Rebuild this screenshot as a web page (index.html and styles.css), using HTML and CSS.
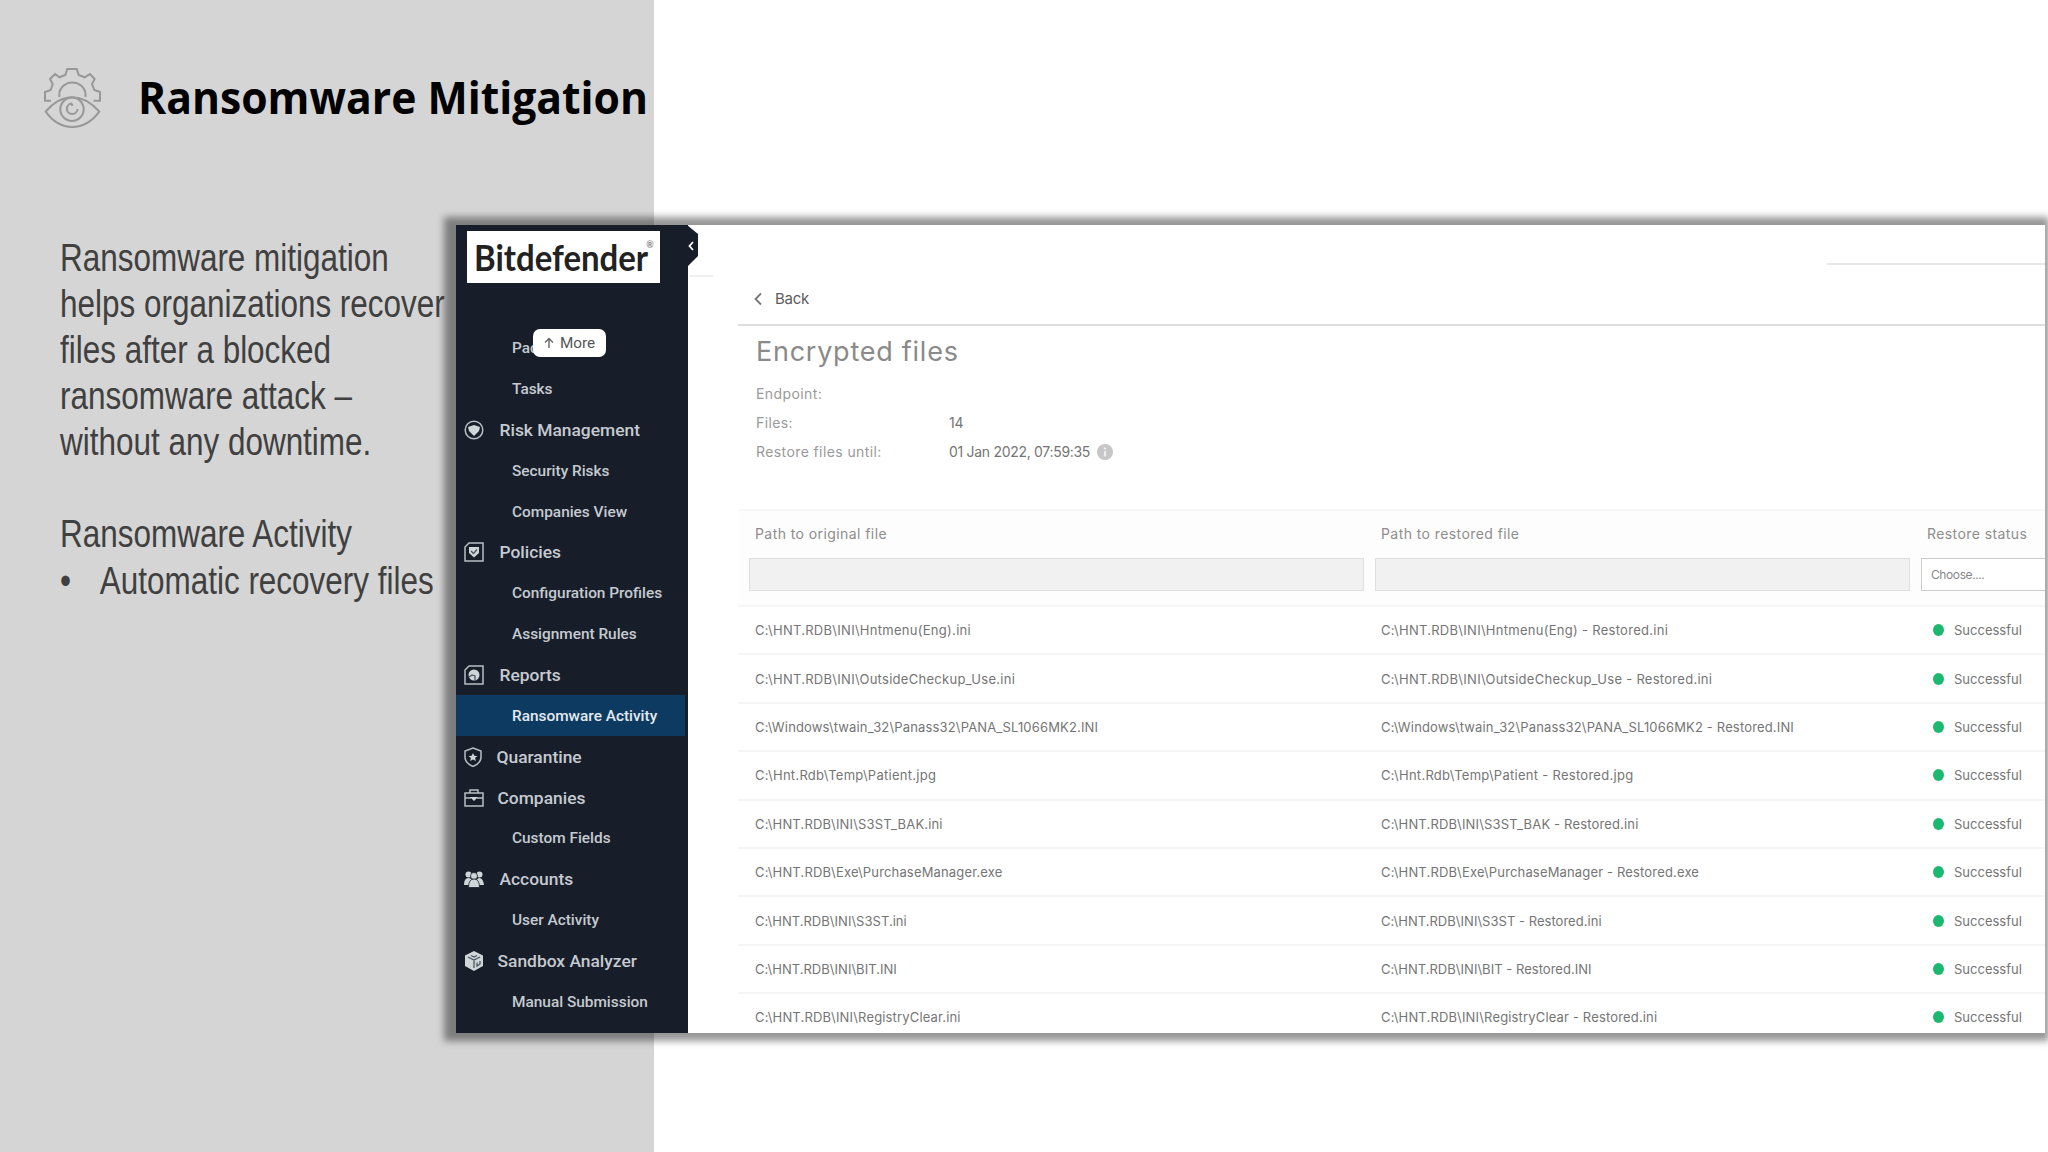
FILE: index.html
```html
<!DOCTYPE html>
<html lang="en">
<head>
<meta charset="utf-8">
<title>Ransomware Mitigation</title>
<link rel="stylesheet" href="styles.css">
</head>
<body>
<main class="slide">
  <section class="intro">
    <header class="intro-head">
      <svg class="gear-eye" viewBox="0 0 60 62" fill="none" stroke="#989898" stroke-width="2">
        <path d="M9 33.700H3V25L8.700 23 10.700 17 8 12 13 7 17.500 10.300 23.300 8 25.300 2H34.700L36.700 8 42.700 10.300 48 7 52.700 12 50 17 52.300 23 58 25V33.700H51.500"/>
        <path d="M17.300 30V28a13 12.500 0 0 1 26.200 0v2"/>
        <path d="M3.700 44.700Q16 30.300 30.300 30.300T57.300 44.700Q46 60 30.300 60T3.700 44.700Z"/>
        <circle cx="30" cy="42.300" r="11.700"/>
        <path d="M30 36.500a5.300 5.300 0 1 0 5.500 5.500M30 36.500v2.500"/>
      </svg>
      <h1>Ransomware Mitigation</h1>
    </header>
    <div class="copy">
      <p>Ransomware mitigation<br>helps organizations recover<br>files after a blocked<br>ransomware attack –<br>without any downtime.</p>
      <p>Ransomware Activity</p>
      <ul><li>Automatic recovery files</li></ul>
    </div>
  </section>

  <section class="window">
    <aside class="sidebar">
      <div class="logo"><span>Bitdefender</span><sup>®</sup></div>
      <div class="handle"><svg viewBox="0 0 11 42"><path d="M0 0 11 9V31L0 42Z" fill="#171e2a"/><path d="M6 17 2.500 21 6 25" fill="none" stroke="#fff" stroke-width="1.800"/></svg></div>
      <nav>
        <a class="sub">Pac</a>
        <a class="sub">Tasks</a>
        <a class="top"><svg viewBox="0 0 20 20"><circle cx="10" cy="10" r="8.800"/><path class="f" d="M4 7l6-2 6 2-1 4-5 5-5-5z"/></svg><span>Risk Management</span></a>
        <a class="sub">Security Risks</a>
        <a class="sub">Companies View</a>
        <a class="top"><svg viewBox="0 0 20 20"><path d="M5 1H19V19H1V5Z"/><path class="f" d="M5 5H15V11L10 15.500 5 11Z"/><path class="d" d="M7 9l2.500 2.500L13 7.500"/></svg><span>Policies</span></a>
        <a class="sub">Configuration Profiles</a>
        <a class="sub">Assignment Rules</a>
        <a class="top"><svg viewBox="0 0 20 20"><path d="M5 1H19V19H1V5Z"/><circle class="f" cx="10" cy="10" r="5.500"/><path class="d" d="M5 12l3-2 3 1 0 4"/></svg><span>Reports</span></a>
        <a class="sub active">Ransomware Activity</a>
        <a class="top q"><svg viewBox="0 0 20 20"><path d="M9 1 17 4V10Q17 16 9 19.500 1 16 1 10V4Z"/><path class="f" d="M9 6l1.300 2.800 3 .3-2.200 2 .7 3L9 12.600 6.200 14.100l.7-3-2.200-2 3-.3z"/></svg><span>Quarantine</span></a>
        <a class="top c"><svg viewBox="0 0 20 20"><path d="M1 5H19V18H1ZM6 5V2H14V5M1 10H7M13 10H19"/><path class="f" d="M6 9H14L10 13Z"/></svg><span>Companies</span></a>
        <a class="sub">Custom Fields</a>
        <a class="top"><svg viewBox="0 0 20 20"><g class="f"><circle cx="4.500" cy="5.500" r="3"/><circle cx="15.500" cy="5.500" r="3"/><path d="M0 16q0-7 4.500-7T8 16ZM12 16q0-7 3.500-7T20 16Z"/></g><g class="f o"><circle cx="10" cy="7" r="3.500"/><path d="M4.500 18.500q0-8.500 5.500-8.500t5.500 8.500Z"/></g></svg><span>Accounts</span></a>
        <a class="sub">User Activity</a>
        <a class="top c"><svg viewBox="0 0 20 20"><path class="f" d="M10 0 19 4.500V15L10 20 1 15V4.500Z"/><path class="d" d="M4 6l6 3 6-3M10 9v8M13 11.500v3.500l3-2v-3M7 4.500l3 1.500 3-1.500"/></svg><span>Sandbox Analyzer</span></a>
        <a class="sub">Manual Submission</a>
      </nav>
      <button class="more"><svg viewBox="0 0 12 12"><path d="M6 11V2M2 5.500 6 1.500 10 5.500" fill="none" stroke="#666" stroke-width="1.400"/></svg><span>More</span></button>
    </aside>
    <div class="content">
      <div class="strip"><i></i><b></b></div>
      <div class="back"><svg viewBox="0 0 8 14"><path d="M7 1.500 1.500 7 7 12.500" fill="none" stroke="#777" stroke-width="1.800"/></svg><span>Back</span></div>
      <h2>Encrypted files</h2>
      <dl>
        <dt>Endpoint:</dt><dd></dd>
        <dt>Files:</dt><dd>14</dd>
        <dt>Restore files until:</dt><dd><span>01 Jan 2022, 07:59:35</span><svg viewBox="0 0 16 16"><circle cx="8" cy="8" r="8" fill="#c6c6c6"/><path d="M8 3.500V5.500M8 7V12.500" stroke="#ececec" stroke-width="2.400"/></svg></dd>
      </dl>
      <div class="table">
        <div class="thead">
          <div><label>Path to original file</label><div class="field"></div></div>
          <div><label>Path to restored file</label><div class="field"></div></div>
          <div><label>Restore status</label><div class="field select">Choose....</div></div>
        </div>
        <div class="row"><span>C:\HNT.RDB\INI\Hntmenu(Eng).ini</span><span>C:\HNT.RDB\INI\Hntmenu(Eng) - Restored.ini</span><span class="ok">Successful</span></div>
        <div class="row"><span>C:\HNT.RDB\INI\OutsideCheckup_Use.ini</span><span>C:\HNT.RDB\INI\OutsideCheckup_Use - Restored.ini</span><span class="ok">Successful</span></div>
        <div class="row long"><span>C:\Windows\twain_32\Panass32\PANA_SL1066MK2.INI</span><span>C:\Windows\twain_32\Panass32\PANA_SL1066MK2 - Restored.INI</span><span class="ok">Successful</span></div>
        <div class="row"><span>C:\Hnt.Rdb\Temp\Patient.jpg</span><span>C:\Hnt.Rdb\Temp\Patient - Restored.jpg</span><span class="ok">Successful</span></div>
        <div class="row long"><span>C:\HNT.RDB\INI\S3ST_BAK.ini</span><span>C:\HNT.RDB\INI\S3ST_BAK - Restored.ini</span><span class="ok">Successful</span></div>
        <div class="row long"><span>C:\HNT.RDB\Exe\PurchaseManager.exe</span><span>C:\HNT.RDB\Exe\PurchaseManager - Restored.exe</span><span class="ok">Successful</span></div>
        <div class="row short"><span>C:\HNT.RDB\INI\S3ST.ini</span><span>C:\HNT.RDB\INI\S3ST - Restored.ini</span><span class="ok">Successful</span></div>
        <div class="row short"><span>C:\HNT.RDB\INI\BIT.INI</span><span>C:\HNT.RDB\INI\BIT - Restored.INI</span><span class="ok">Successful</span></div>
        <div class="row long"><span>C:\HNT.RDB\INI\RegistryClear.ini</span><span>C:\HNT.RDB\INI\RegistryClear - Restored.ini</span><span class="ok">Successful</span></div>
      </div>
    </div>
  </section>
</main>
</body>
</html>
```
FILE: styles.css
```css
* { box-sizing: border-box; margin: 0; padding: 0; }
body { background: #fff; }
.slide { position: relative; width: 2048px; height: 1152px; overflow: hidden; background: #fff; }

.intro { width: 654px; height: 1152px; background: #d5d5d5; }
.intro-head { display: flex; align-items: center; gap: 36px; height: 196px; padding-left: 42px; }
.gear-eye { width: 60px; height: 62px; flex: none; }
h1 { font: bold 45px/60px "Open Sans", sans-serif; color: #000; white-space: nowrap; transform: scaleX(.948); transform-origin: left; margin-top: -2px; }
.copy { position: relative; z-index: 2; width: 470px; margin: 39px 0 0 60px; font: 38px/46.100px "Liberation Sans", Arial, sans-serif; color: #404040; white-space: nowrap; transform: scaleX(.828); transform-origin: left; }
.copy p + p { margin-top: 46px; }
.copy ul { list-style: none; }
.copy li { display: flex; }
.copy li::before { content: "•"; width: 48px; flex: none; }

.window { position: absolute; left: 456px; top: 225px; width: 1589px; height: 808px; display: flex; background: #fff; box-shadow: -4px 0 7px 8px rgba(0, 0, 0, .41); }
.sidebar { position: relative; width: 232px; flex: none; background: #171e2a; padding-top: 6px; }
.logo { display: flex; align-items: center; margin-left: 11px; width: 193px; height: 52px; padding-left: 7px; background: #fff; color: #222; font: bold 36px/52px Lato, sans-serif; }
.logo span { transform: scaleX(.915); transform-origin: left; }
.logo sup { font-size: 9px; line-height: 10px; align-self: flex-start; margin: 9px 0 0 -18px; color: #888; }
.handle { position: absolute; left: 231px; top: 0; width: 11px; height: 42px; z-index: 1; }
.handle svg { display: block; width: 11px; height: 42px; }
nav { margin-top: 44.700px; font-family: Roboto, sans-serif; font-weight: 500; color: #c6cad0; }
nav a { display: flex; align-items: center; height: 40.870px; white-space: nowrap; }
nav .sub { width: 229px; padding-left: 56px; font-size: 15.400px; }
nav .top { padding-left: 7.500px; gap: 16px; font-size: 17.400px; }
nav .top.q { gap: 13px; }
nav .top.c { gap: 14px; }
nav .active { background: #0d3a60; color: #e3eaf1; }
nav svg { width: 20px; height: 20px; fill: none; stroke: #b9bec4; stroke-width: 1.500; }
nav svg .f { fill: #cfd5d8; stroke: none; }
nav svg .o { stroke: #171e2a; stroke-width: .8; }
nav svg .d { stroke: #4a555f; stroke-width: 1.300; }
.more { position: absolute; left: 77px; top: 104px; width: 73px; height: 28px; display: flex; align-items: center; gap: 5px; padding-left: 10px; border: 0; border-radius: 7px; background: #fff; color: #555; font: 15.300px Roboto, sans-serif; }
.more svg { width: 12px; height: 12px; }

.content { flex: 1; min-width: 0; overflow: hidden; padding-left: 50px; font-family: Inter, sans-serif; color: #757575; }
.strip { display: flex; justify-content: space-between; height: 52px; margin-left: -48px; align-items: flex-end; }
.strip i { width: 24px; height: 2px; background: #f0f0f0; }
.strip b { width: 218px; height: 2px; margin-bottom: 12px; background: #e6e6e6; }
.back { display: flex; align-items: center; gap: 13px; height: 49px; padding: 0 0 4px 16px; border-bottom: 2px solid #dedede; font-size: 15px; letter-spacing: -.3px; color: #5c5c5c; }
.back svg { width: 8px; height: 14px; }
h2 { padding: 9px 0 0 18px; height: 53px; font-weight: 400; font-size: 27px; line-height: 34px; letter-spacing: .75px; color: #8a8a8a; }
dl { display: grid; grid-template-columns: 193px 1fr; grid-auto-rows: 29px; align-items: center; padding-left: 18px; font-size: 14px; letter-spacing: .4px; color: #9a9a9a; }
dd { display: flex; align-items: center; gap: 7px; letter-spacing: -.3px; color: #757575; }
dd svg { width: 16px; height: 16px; }
.table { margin-top: 43px; border-top: 2px solid #f7f7f7; }
.thead { display: grid; grid-template-columns: 615px 535px 1fr; gap: 11px; height: 94px; padding-left: 11px; background: #fdfdfd; }
.thead label { display: block; height: 47px; padding-left: 6px; font-size: 14px; line-height: 46px; letter-spacing: .42px; color: #8d8d8d; }
.field { height: 33px; border: 1px solid #dfdfdf; background: #f1f1f1; }
.select { border-color: #ccc; border-right: 0; background: #fff; padding-left: 9px; font-size: 12px; line-height: 31px; letter-spacing: -.4px; color: #888; }
.row { display: grid; grid-template-columns: 626px 573px 1fr; align-items: center; height: 48.400px; padding-left: 17px; border-top: 2px solid #f6f6f6; font-size: 13px; letter-spacing: .28px; white-space: nowrap; }
.row.long { letter-spacing: .16px; }
.row.short { letter-spacing: .03px; }
.ok { display: flex; align-items: center; gap: 10px; margin-left: -21px; letter-spacing: 0; }
.ok::before { content: ""; width: 11px; height: 12px; border-radius: 50%; background: #1db86f; }
```
